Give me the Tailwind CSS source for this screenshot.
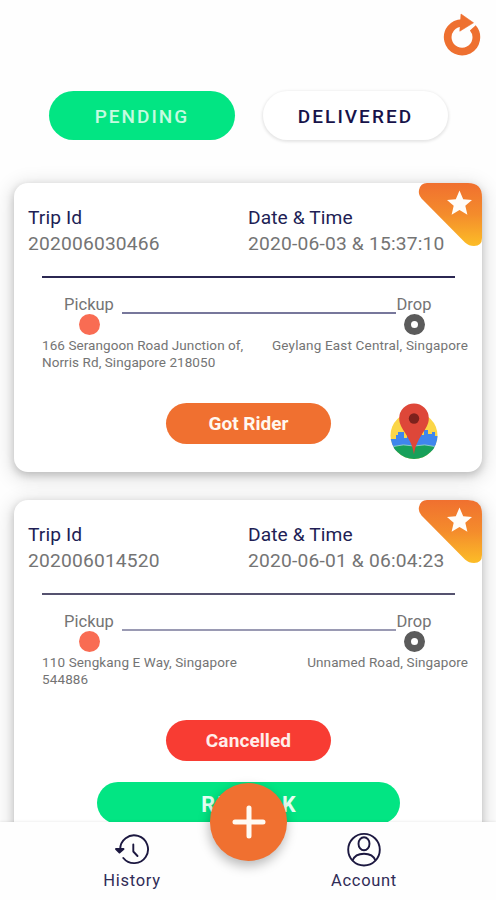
<!DOCTYPE html>
<html lang="en">
<head>
<meta charset="utf-8">
<title>Trips</title>
<script src="https://cdn.jsdelivr.net/npm/@tailwindcss/browser@4"></script>
</head>
<body class="bg-[#fefefe]">
<div class="relative flex h-[900px] w-[496px] flex-col overflow-hidden bg-[#fefefe] font-['Roboto',sans-serif] text-[#747474]">
  <header class="flex h-[91px] shrink-0 justify-end pt-[13px] pr-[14px]">
    <svg class="h-[44px] w-[40px]" viewBox="0 0 40 44" fill="none">
      <path d="M20 10A14.300 14.300 0 1 0 30.800 14.900" stroke="#ee7030" stroke-width="7.700"/>
      <path d="M19 1L31.500 9.800L17.800 18.200Z" fill="#ee7030" stroke="#ee7030" stroke-width=".6" stroke-linejoin="round"/>
    </svg>
  </header>
  <div class="flex h-[92px] shrink-0 gap-[28px] pl-[49px] text-[19px] font-medium">
    <div class="flex h-[49px] w-[186px] items-center justify-center rounded-full bg-[#02e583] pt-[3px] tracking-[2px] text-[#c5fbe0]">PENDING</div>
    <div class="flex h-[49px] w-[185px] items-center justify-center rounded-full bg-white pt-[3px] tracking-[2.050px] text-[#17134a] shadow-[0_1px_3px_1px_rgba(0,0,0,0.1)]">DELIVERED</div>
  </div>

  <main class="flex min-h-0 flex-1 flex-col gap-[28px] px-[14px]">
    <section class="relative h-[289px] shrink-0 rounded-[14px] bg-white pt-[22px] shadow-[0_3px_8px_0_rgba(0,0,0,0.2),0_4px_18px_5px_rgba(0,0,0,0.1)]">
      <svg class="absolute top-0 right-0 h-[64px] w-[64px]" viewBox="0 0 64 64">
        <defs><linearGradient id="ribbon" x1="0" y1="0" x2="0" y2="1"><stop offset="0" stop-color="#f0702f"/><stop offset=".5" stop-color="#f48c2c"/><stop offset="1" stop-color="#fcbd27"/></linearGradient></defs>
        <path d="M9 0H50Q64 0 64 14V55Q64 63 56 63Q51 63 47 59.5L3.5 15.5Q0 11.5 1 7Q2.500 0 9 0Z" fill="url(#ribbon)"/>
        <path d="M41.500 7.500L45.200 16.200L54 17L47.300 22.800L49.400 31.800L41.500 27L33.600 31.800L35.700 22.800L29 17L37.800 16.200Z" fill="#fffdf9"/>
      </svg>
      <div class="grid grid-cols-[220px_1fr] pl-[14px] text-[19.2px] leading-[26px]">
        <div><h2 class="tracking-[0.1px] text-[#211e55]">Trip Id</h2><p class="tracking-[0.2px]">202006030466</p></div>
        <div><h2 class="tracking-[0.1px] text-[#211e55]">Date &amp; Time</h2><p class="tracking-[0.2px]">2020-06-03 &amp; 15:37:10</p></div>
      </div>
      <div class="mt-[19px] ml-[28px] h-[2px] w-[413px] bg-[#2b2752]"></div>
      <div class="mt-[16px] flex pl-[50px] text-[16.5px] leading-[22px]">
        <div class="flex w-[50px] flex-col items-center"><span>Pickup</span><span class="mt-[-2px] h-[21px] w-[21px] rounded-full bg-[#f96c53]"></span></div>
        <div class="mt-[18px] ml-[8px] h-[2px] w-[274px] bg-[#77779b]"></div>
        <div class="flex w-[36px] flex-col items-center"><span>Drop</span><span class="mt-[-2px] h-[21px] w-[21px] rounded-full border-[7px] border-[#5b5b5b] bg-white"></span></div>
      </div>
      <div class="mt-[2px] flex h-[34px] justify-between pr-[14px] pl-[28px] text-[13.500px] leading-[17px]">
        <p class="tracking-[0.07px]">166 Serangoon Road Junction of,<br>Norris Rd, Singapore 218050</p>
        <p class="tracking-[0.17px]">Geylang East Central, Singapore</p>
      </div>
      <div class="mt-[32px] flex pl-[152px]">
        <div class="flex h-[41px] w-[165px] items-center justify-center rounded-full bg-[#f07030] pt-[2px] text-[19px] font-bold text-[#fff8ef]">Got Rider</div>
        <svg class="ml-[58px] h-[58px] w-[50px]" viewBox="0 0 50 58">
          <defs><clipPath id="globe"><circle cx="25" cy="32.500" r="23.500"/></clipPath></defs>
          <g clip-path="url(#globe)">
            <path d="M0 0H50V58H0Z" fill="#fbd647"/>
            <path d="M0 36H7V32H9V29H15V35H18V28H33V32H35V27H39V31H43V29H46V33H50V48H0Z" fill="#3f86ed"/>
            <path d="M0 45Q12 40 25 43Q38 40 50 45V58H0Z" fill="#18a05a"/>
            <path d="M4 43.500Q14 40.500 25 43Q36 40.500 46 43.500" fill="none" stroke="#8cc9c5" stroke-width="1"/>
          </g>
          <path d="M25 0.500A14.800 14.800 0 0 0 10.200 15.300C10.200 27 22.500 33 25 51.500C27.500 33 39.800 27 39.800 15.300A14.800 14.800 0 0 0 25 0.500Z" fill="#de4739"/>
          <circle cx="25" cy="15.500" r="5.200" fill="#7d221d"/>
        </svg>
      </div>
    </section>

    <section class="relative h-[360px] shrink-0 rounded-[14px] bg-white pt-[22px] shadow-[0_3px_8px_0_rgba(0,0,0,0.2),0_4px_18px_5px_rgba(0,0,0,0.1)]">
      <svg class="absolute top-0 right-0 h-[64px] w-[64px]" viewBox="0 0 64 64">
        <path d="M9 0H50Q64 0 64 14V55Q64 63 56 63Q51 63 47 59.5L3.5 15.5Q0 11.5 1 7Q2.500 0 9 0Z" fill="url(#ribbon)"/>
        <path d="M41.500 7.500L45.200 16.200L54 17L47.300 22.800L49.400 31.800L41.500 27L33.600 31.800L35.700 22.800L29 17L37.800 16.200Z" fill="#fffdf9"/>
      </svg>
      <div class="grid grid-cols-[220px_1fr] pl-[14px] text-[19.2px] leading-[26px]">
        <div><h2 class="tracking-[0.1px] text-[#211e55]">Trip Id</h2><p class="tracking-[0.2px]">202006014520</p></div>
        <div><h2 class="tracking-[0.1px] text-[#211e55]">Date &amp; Time</h2><p class="tracking-[0.2px]">2020-06-01 &amp; 06:04:23</p></div>
      </div>
      <div class="mt-[19px] ml-[28px] h-[2px] w-[413px] bg-[#55526f]"></div>
      <div class="mt-[16px] flex pl-[50px] text-[16.5px] leading-[22px]">
        <div class="flex w-[50px] flex-col items-center"><span>Pickup</span><span class="mt-[-2px] h-[21px] w-[21px] rounded-full bg-[#f96c53]"></span></div>
        <div class="mt-[18px] ml-[8px] h-[2px] w-[274px] bg-[#9a9ab3]"></div>
        <div class="flex w-[36px] flex-col items-center"><span>Drop</span><span class="mt-[-2px] h-[21px] w-[21px] rounded-full border-[7px] border-[#5b5b5b] bg-white"></span></div>
      </div>
      <div class="mt-[2px] flex h-[34px] justify-between pr-[14px] pl-[28px] text-[13.500px] leading-[17px]">
        <p class="tracking-[0.13px]">110 Sengkang E Way, Singapore<br>544886</p>
        <p class="tracking-[0.1px]">Unnamed Road, Singapore</p>
      </div>
      <div class="mt-[32px] ml-[152px] flex h-[41px] w-[165px] items-center justify-center rounded-full bg-[#f83c33] pt-[2px] text-[19px] font-bold tracking-[0.1px] text-[#ffeeea]">Cancelled</div>
      <div class="mt-[21px] ml-[83px] flex h-[42px] w-[303px] items-center justify-center rounded-full bg-[#02e583] pt-[5px] pl-[2px] text-[21.500px] font-bold tracking-[2.300px] text-[#e6fff2]">REBOOK</div>
    </section>
  </main>

  <nav class="absolute inset-x-0 bottom-0 h-[78px] bg-[#fefefe] shadow-[0_-1px_2px_rgba(0,0,0,0.06)]">
    <div class="flex justify-between pr-[98px] pl-[103px] text-[16.500px] tracking-[0.7px] text-[#302c57]">
      <div class="flex w-[58px] flex-col items-center pt-[9px]">
        <svg class="h-[36px] w-[36px]" viewBox="0 0 36 36" fill="none" stroke="#1c1840" stroke-width="1.900" stroke-linecap="round" stroke-linejoin="round">
          <path d="M6.200 18.500A13.900 13.900 0 1 1 9.300 27"/>
          <path d="M2 18H9.500L5.500 21.500Z" fill="#1c1840"/>
          <path d="M19.300 13.500V20.500L23.500 25"/>
        </svg>
        <span class="mt-[2px] leading-[24px]">History</span>
      </div>
      <div class="flex w-[68px] flex-col items-center pt-[9px]">
        <svg class="h-[36px] w-[36px]" viewBox="0 0 36 36" fill="none" stroke="#1c1840" stroke-width="1.900">
          <circle cx="18" cy="18.700" r="15.800"/>
          <ellipse cx="18" cy="12.800" rx="5.500" ry="6.500"/>
          <path d="M6.500 29.500C10 20.500 26 20.500 29.500 29.500"/>
        </svg>
        <span class="mt-[2px] leading-[24px]">Account</span>
      </div>
    </div>
    <div class="absolute top-[-39px] left-[210px] flex h-[78px] w-[77px] items-center justify-center rounded-full bg-[#f07030] shadow-[-1px_5px_12px_rgba(0,0,0,0.28)]">
      <svg class="h-[36px] w-[36px]" viewBox="0 0 36 36" stroke="#fffaf2" stroke-width="5" stroke-linecap="round"><path d="M18 4V32M4 18H32"/></svg>
    </div>
  </nav>
</div>
</body>
</html>
